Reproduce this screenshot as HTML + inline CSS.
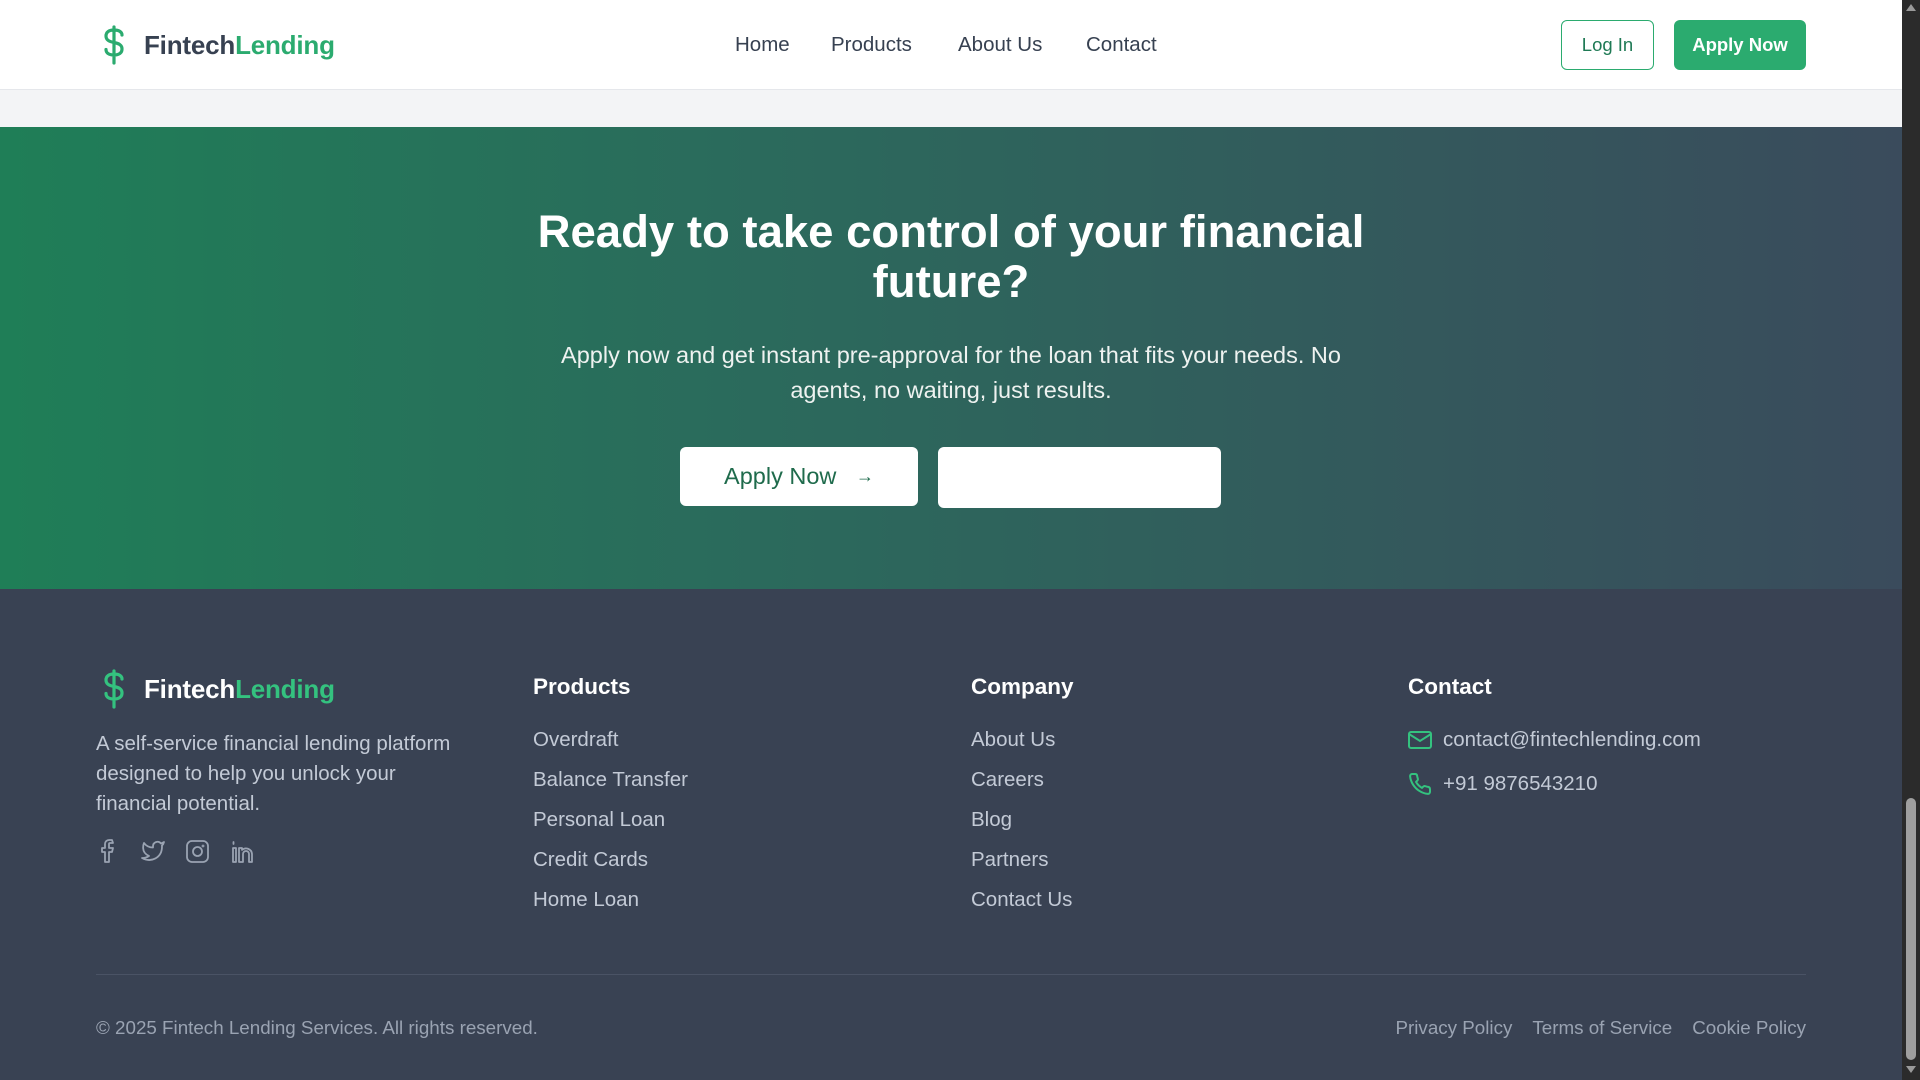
<!DOCTYPE html>
<html><head><meta charset="utf-8"><style>
*{box-sizing:border-box;margin:0;padding:0}
body{width:1920px;height:1080px;overflow:hidden;font-family:"Liberation Sans",sans-serif;background:#f3f4f6;position:relative}
.main{position:absolute;left:0;top:0;width:1902px;height:1080px}
header{height:90px;background:#fff;border-bottom:1px solid #e5e7eb;position:relative}
.logo{position:absolute;display:flex;align-items:center;font-weight:bold;font-size:26px;letter-spacing:-0.2px}
.logo svg{margin-right:17px}
nav{position:absolute;top:33px;font-size:20.5px;color:#374151}
nav span{position:absolute;white-space:nowrap}
.btn{position:absolute;border-radius:6px;display:flex;align-items:center;justify-content:center;font-weight:bold;font-size:18.5px}
.cta{position:absolute;top:127px;left:0;width:1902px;height:462px;background:linear-gradient(90deg,#1f7e57 0%,#2b6a5c 40%,#3a4b5c 100%);color:#fff;text-align:center}
.cta h1{position:absolute;top:80px;left:0;width:100%;font-size:45.5px;line-height:50px;font-weight:bold}
.cta p{position:absolute;top:211px;left:0;width:100%;font-size:23.5px;line-height:35px;color:#eef2f0}
footer{position:absolute;top:589px;left:0;width:1902px;height:491px;background:#394253;color:#c3cad6}
.col{position:absolute;top:85px}
.col h3{color:#fff;font-size:22.5px;font-weight:bold;margin-bottom:20px}
.col div{font-size:20.5px;line-height:40px;color:#c3cad6}
.sb{position:absolute;right:0;top:0;width:18px;height:1080px;background:#2b2b2b}
</style></head><body>
<div class="main">
<header>
 <div class="logo" style="left:101px;top:25px"><svg width="26" height="40" viewBox="0 0 24 40" fill="none" stroke="#2bab6f" stroke-width="3.2" stroke-linecap="round"><path d="M12 2v36M20 10c0-3-3-5-8-5s-8 2-8 6 3 5.5 8 6.5 8 2.5 8 6.5-3 6-8 6-8-2-8-5.5"/></svg><span style="color:#374151">Fintech</span><span style="color:#2bab6f">Lending</span></div>
 <nav><span style="left:735px">Home</span><span style="left:831px">Products</span><span style="left:958px">About Us</span><span style="left:1086px">Contact</span></nav>
 <div class="btn" style="left:1561px;top:20px;width:93px;height:50px;border:1px solid #2bab6f;color:#1f7a55;font-weight:normal;font-size:18.5px">Log In</div>
 <div class="btn" style="left:1674px;top:20px;width:132px;height:50px;background:#2bab6f;color:#fff">Apply Now</div>
</header>
<div class="cta">
 <h1>Ready to take control of your financial<br>future?</h1>
 <p>Apply now and get instant pre-approval for the loan that fits your needs. No<br>agents, no waiting, just results.</p>
 <div class="btn" style="left:680px;top:320px;width:238px;height:59px;background:#fff;color:#1f6b4c;font-weight:normal;font-size:23.5px">Apply Now&nbsp;&nbsp;&nbsp;<span style="font-size:18px">→</span></div>
 <div class="btn" style="left:938px;top:320px;width:283px;height:61px;background:#fff"></div>
</div>
<footer>
 <div class="logo" style="left:101px;top:80px"><svg width="26" height="40" viewBox="0 0 24 40" fill="none" stroke="#34c27f" stroke-width="3.2" stroke-linecap="round"><path d="M12 2v36M20 10c0-3-3-5-8-5s-8 2-8 6 3 5.5 8 6.5 8 2.5 8 6.5-3 6-8 6-8-2-8-5.5"/></svg><span style="color:#fff">Fintech</span><span style="color:#34c27f">Lending</span></div>
 <div style="position:absolute;left:96px;top:140px;font-size:20.5px;line-height:30px;width:370px">A self-service financial lending platform designed to help you unlock your financial potential.</div>
 <svg style="position:absolute;left:96px;top:248px" width="170" height="30" viewBox="0 0 170 30" fill="none" stroke="#9aa3b2" stroke-width="1.8" stroke-linecap="round" stroke-linejoin="round">
  <path d="M16 3h-3a4 4 0 0 0-4 4v4H6v4h3v10h4V15h3l1-4h-4V7a1 1 0 0 1 1-1h3z"/>
  <path d="M68 5a10 10 0 0 1-3 1.5 4.5 4.5 0 0 0-8 3v1A11 11 0 0 1 48 6s-4 9 5 13a11.5 11.5 0 0 1-7 2c9 5 20 0 20-11.5 0-.3 0-.6-.1-.8A7.7 7.7 0 0 0 68 5z"/>
  <rect x="91" y="4" width="21" height="21" rx="5"/><circle cx="101.5" cy="14.5" r="4.5"/><circle cx="107" cy="9" r=".5"/>
  <path d="M137 11v14h3V11zM137.5 5v2M143 25V11h3v2a6 6 0 0 1 10 4v8h-3v-8a3 3 0 0 0-6 0v8z"/>
 </svg>
 <div class="col" style="left:533px"><h3>Products</h3><div>Overdraft</div><div>Balance Transfer</div><div>Personal Loan</div><div>Credit Cards</div><div>Home Loan</div></div>
 <div class="col" style="left:971px"><h3>Company</h3><div>About Us</div><div>Careers</div><div>Blog</div><div>Partners</div><div>Contact Us</div></div>
 <div class="col" style="left:1408px"><h3>Contact</h3>
  <div style="display:flex;align-items:center;line-height:44px;margin-top:-2px"><svg width="24" height="20" viewBox="0 0 24 20" fill="none" stroke="#34c27f" stroke-width="2"><rect x="1" y="2" width="22" height="16" rx="2"/><path d="M1 4l11 7 11-7"/></svg><span style="margin-left:11px">contact@fintechlending.com</span></div>
  <div style="display:flex;align-items:center;line-height:44px"><svg width="24" height="24" viewBox="0 0 24 24" fill="none" stroke="#34c27f" stroke-width="2" stroke-linejoin="round"><path d="M22 16.9v3a2 2 0 0 1-2.2 2 19.8 19.8 0 0 1-8.6-3.1 19.5 19.5 0 0 1-6-6A19.8 19.8 0 0 1 2.1 4.2 2 2 0 0 1 4.1 2h3a2 2 0 0 1 2 1.7c.1 1 .4 1.9.7 2.8a2 2 0 0 1-.5 2.1L8 9.9a16 16 0 0 0 6 6l1.3-1.3a2 2 0 0 1 2.1-.4c.9.3 1.8.6 2.8.7a2 2 0 0 1 1.7 2z"/></svg><span style="margin-left:11px">+91 9876543210</span></div>
 </div>
 <div style="position:absolute;left:96px;top:385px;width:1710px;height:1px;background:#4a5365"></div>
 <div style="position:absolute;left:96px;top:428px;font-size:18.8px;color:#9aa3b2">© 2025 Fintech Lending Services. All rights reserved.</div>
 <div style="position:absolute;right:96px;top:428px;font-size:18.8px;color:#9aa3b2;display:flex;gap:20px"><span>Privacy Policy</span><span>Terms of Service</span><span>Cookie Policy</span></div>
</footer>
</div>
<div class="sb"><div style="position:absolute;left:4px;top:4px;border:5px solid transparent;border-bottom:7px solid #9a9a9a;border-top:0"></div><div style="position:absolute;left:4px;top:798px;width:10px;height:262px;background:#9f9f9f;border-radius:5px"></div><div style="position:absolute;left:4px;top:1066px;border:5px solid transparent;border-top:7px solid #9a9a9a;border-bottom:0"></div></div>
</body></html>
